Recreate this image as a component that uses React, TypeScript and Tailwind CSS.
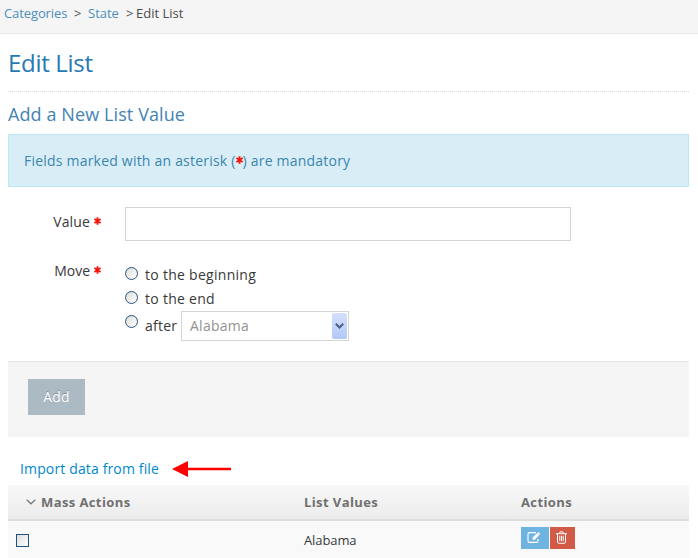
import type { ReactNode } from "react";

function Asterisk({ className = "" }: { className?: string }) {
  return (
    <svg viewBox="0 0 7 8" className={`inline-block h-2 w-[7px] shrink-0 ${className}`} fill="none" stroke="#f5140c" strokeWidth="1.9">
      <path d="M3.5 0.3v7.4M0.4 2l6.2 4M6.6 2L0.4 6" />
    </svg>
  );
}

function Radio() {
  return <span className="block size-[13px] shrink-0 rounded-full border border-[#23527c] bg-linear-to-br from-[#dcdcd8] to-white" />;
}

function Option({ children }: { children: ReactNode }) {
  return (
    <div className="flex h-6 gap-[7px]">
      <div className="pt-[5px]"><Radio /></div>
      <span className="pt-px leading-6 tracking-[0.28px]">{children}</span>
    </div>
  );
}

export default function App() {
  return (
    <div className="h-[558px] w-[698px] overflow-hidden bg-white font-['Open_Sans',sans-serif] text-[14px] whitespace-nowrap text-[#393939]">
      <nav className="flex h-[34px] border-b border-[#e5e5e5] bg-[#f5f5f5] pl-1 text-[13px] leading-[27px] text-[#4c4c4c]">
        <a className="w-[70px] tracking-[-0.1px] text-[#4c8fbd]">Categories</a>
        <span className="w-[14px]">&gt;</span>
        <a className="w-[38px] text-[#4c8fbd]">State</a>
        <span className="w-[10px]">&gt;</span>
        <span>Edit List</span>
      </nav>
      <main className="w-[689px] pl-2">
        <h1 className="h-[58px] border-b border-dotted border-[#d9d9d9] pt-[13px] text-[24px] leading-8 tracking-[-0.3px] text-[#2679b5]">Edit List</h1>
        <h2 className="h-[42px] pt-[10px] text-[18px] leading-6 tracking-[0.1px] text-[#4383b4]">Add a New List Value</h2>
        <div className="h-[53px] border border-[#bce8f1] bg-[#d9edf7] pl-[15px] leading-[51px] tracking-[0.21px] text-[#3a87ad]">
          Fields marked with an asterisk (<Asterisk className="align-[2px]" />) are mandatory
        </div>
        <form>
          <div className="flex h-[54px] pt-5">
            <label className="flex h-7 w-[93px] items-center justify-end gap-1 tracking-[0.15px]">Value <Asterisk /></label>
            <div className="ml-6 h-[34px] w-[446px] border border-[#d5d5d5] bg-white" />
          </div>
          <div className="flex h-[120px]">
            <label className="mt-[15px] flex h-7 w-[93px] items-center justify-end gap-1">Move <Asterisk /></label>
            <div className="ml-6 pt-[21px]">
              <Option>to the beginning</Option>
              <Option>to the end</Option>
              <div className="flex gap-[7px]">
                <div className="pt-[5px]"><Radio /></div>
                <span className="w-[29px] pt-px leading-[30px] tracking-[0.25px]">after</span>
                <div className="mt-px flex h-[30px] w-[168px] items-center justify-between border border-[#d5d5d5] bg-white pr-px pl-2 text-[#939192]">
                  <span className="pb-0.5 tracking-[0.25px]">Alabama</span>
                  <span className="flex h-[26px] w-[15px] items-center justify-center rounded-[2px] bg-linear-to-b from-[#d5e0fc] to-[#b0c8f8]">
                    <svg viewBox="0 0 9 6" className="h-[6px] w-[9px]" fill="none" stroke="#4d6185" strokeWidth="2"><path d="M.8.8l3.7 3.7L8.2.8" /></svg>
                  </span>
                </div>
              </div>
            </div>
          </div>
          <div className="h-[76px] border-t border-[#e5e5e5] bg-[#f5f5f5] pt-[17px] pl-5">
            <button className="block h-9 w-[57px] bg-[#abbac3] pb-0.5 tracking-[0.1px] text-white [text-shadow:0_-1px_0_rgba(0,0,0,0.25)]">Add</button>
          </div>
        </form>
        <div className="flex h-12 items-center pt-4 pl-3">
          <a className="w-[152px] pb-0.5 tracking-[0.14px] text-[#0088cc]">Import data from file</a>
          <svg viewBox="0 0 59 16" className="h-4 w-[59px]" fill="#fe0000"><path d="M0 8L16 0v6.7h43v2.6H16V16z" /></svg>
        </div>
        <div className="text-[13px]">
          <div className="grid h-9 grid-cols-[296px_217px_1fr] border-b-2 border-[#ddd] bg-linear-to-b from-[#f8f8f8] to-[#ececec] leading-[34px] font-bold tracking-[0.4px] text-[#707070]">
            <div className="flex items-center pl-[18px]">
              <svg viewBox="0 0 10 6" className="mr-[5px] h-[6px] w-[10px]" fill="none" stroke="#777" strokeWidth="1.2"><path d="M.7.7L5 4.8 9.3.7" /></svg>
              Mass Actions
            </div>
            <div>List Values</div>
            <div>Actions</div>
          </div>
          <div className="grid h-[37px] grid-cols-[296px_217px_1fr] bg-[#f9f9f9]">
            <div className="pt-[13px] pl-2"><span className="block size-[13px] border border-[#1c5180] bg-linear-to-br from-[#dcdcd7] to-white" /></div>
            <div className="pt-[7px] leading-6 tracking-[-0.1px]">Alabama</div>
            <div className="flex gap-px pt-[6px]">
              <span className="flex h-[22px] w-7 items-start justify-center bg-[#6fb3e0] pt-1 pr-0.5">
                <svg viewBox="0 0 14 13" className="h-[13px] w-[14px]" fill="none" stroke="white" strokeWidth="1.1">
                  <path d="M9 1.6H2.5Q1 1.6 1 3v7q0 1.4 1.5 1.4h7q1.5 0 1.5-1.4V8" />
                  <path d="M5.6 8.7V6.6L11.2 1l2 2-5.5 5.7z" fill="white" stroke="none" />
                  <path d="M10 2.2l2 2" stroke="#6fb3e0" strokeWidth=".7" />
                </svg>
              </span>
              <span className="flex h-[22px] w-[25px] items-start justify-center bg-[#d15b47] pt-1 pr-0.5">
                <svg viewBox="0 0 11 13" className="h-[13px] w-[11px]" fill="none" stroke="white">
                  <path d="M0 2.7h11M3.5 2.5l.6-1.7h2.8l.6 1.7M1.5 3v7.8q0 1.5 1.2 1.5h5.6q1.2 0 1.2-1.5V3M3.8 4.8v5.4M5.5 4.8v5.4M7.2 4.8v5.4" />
                </svg>
              </span>
            </div>
          </div>
        </div>
      </main>
    </div>
  );
}
